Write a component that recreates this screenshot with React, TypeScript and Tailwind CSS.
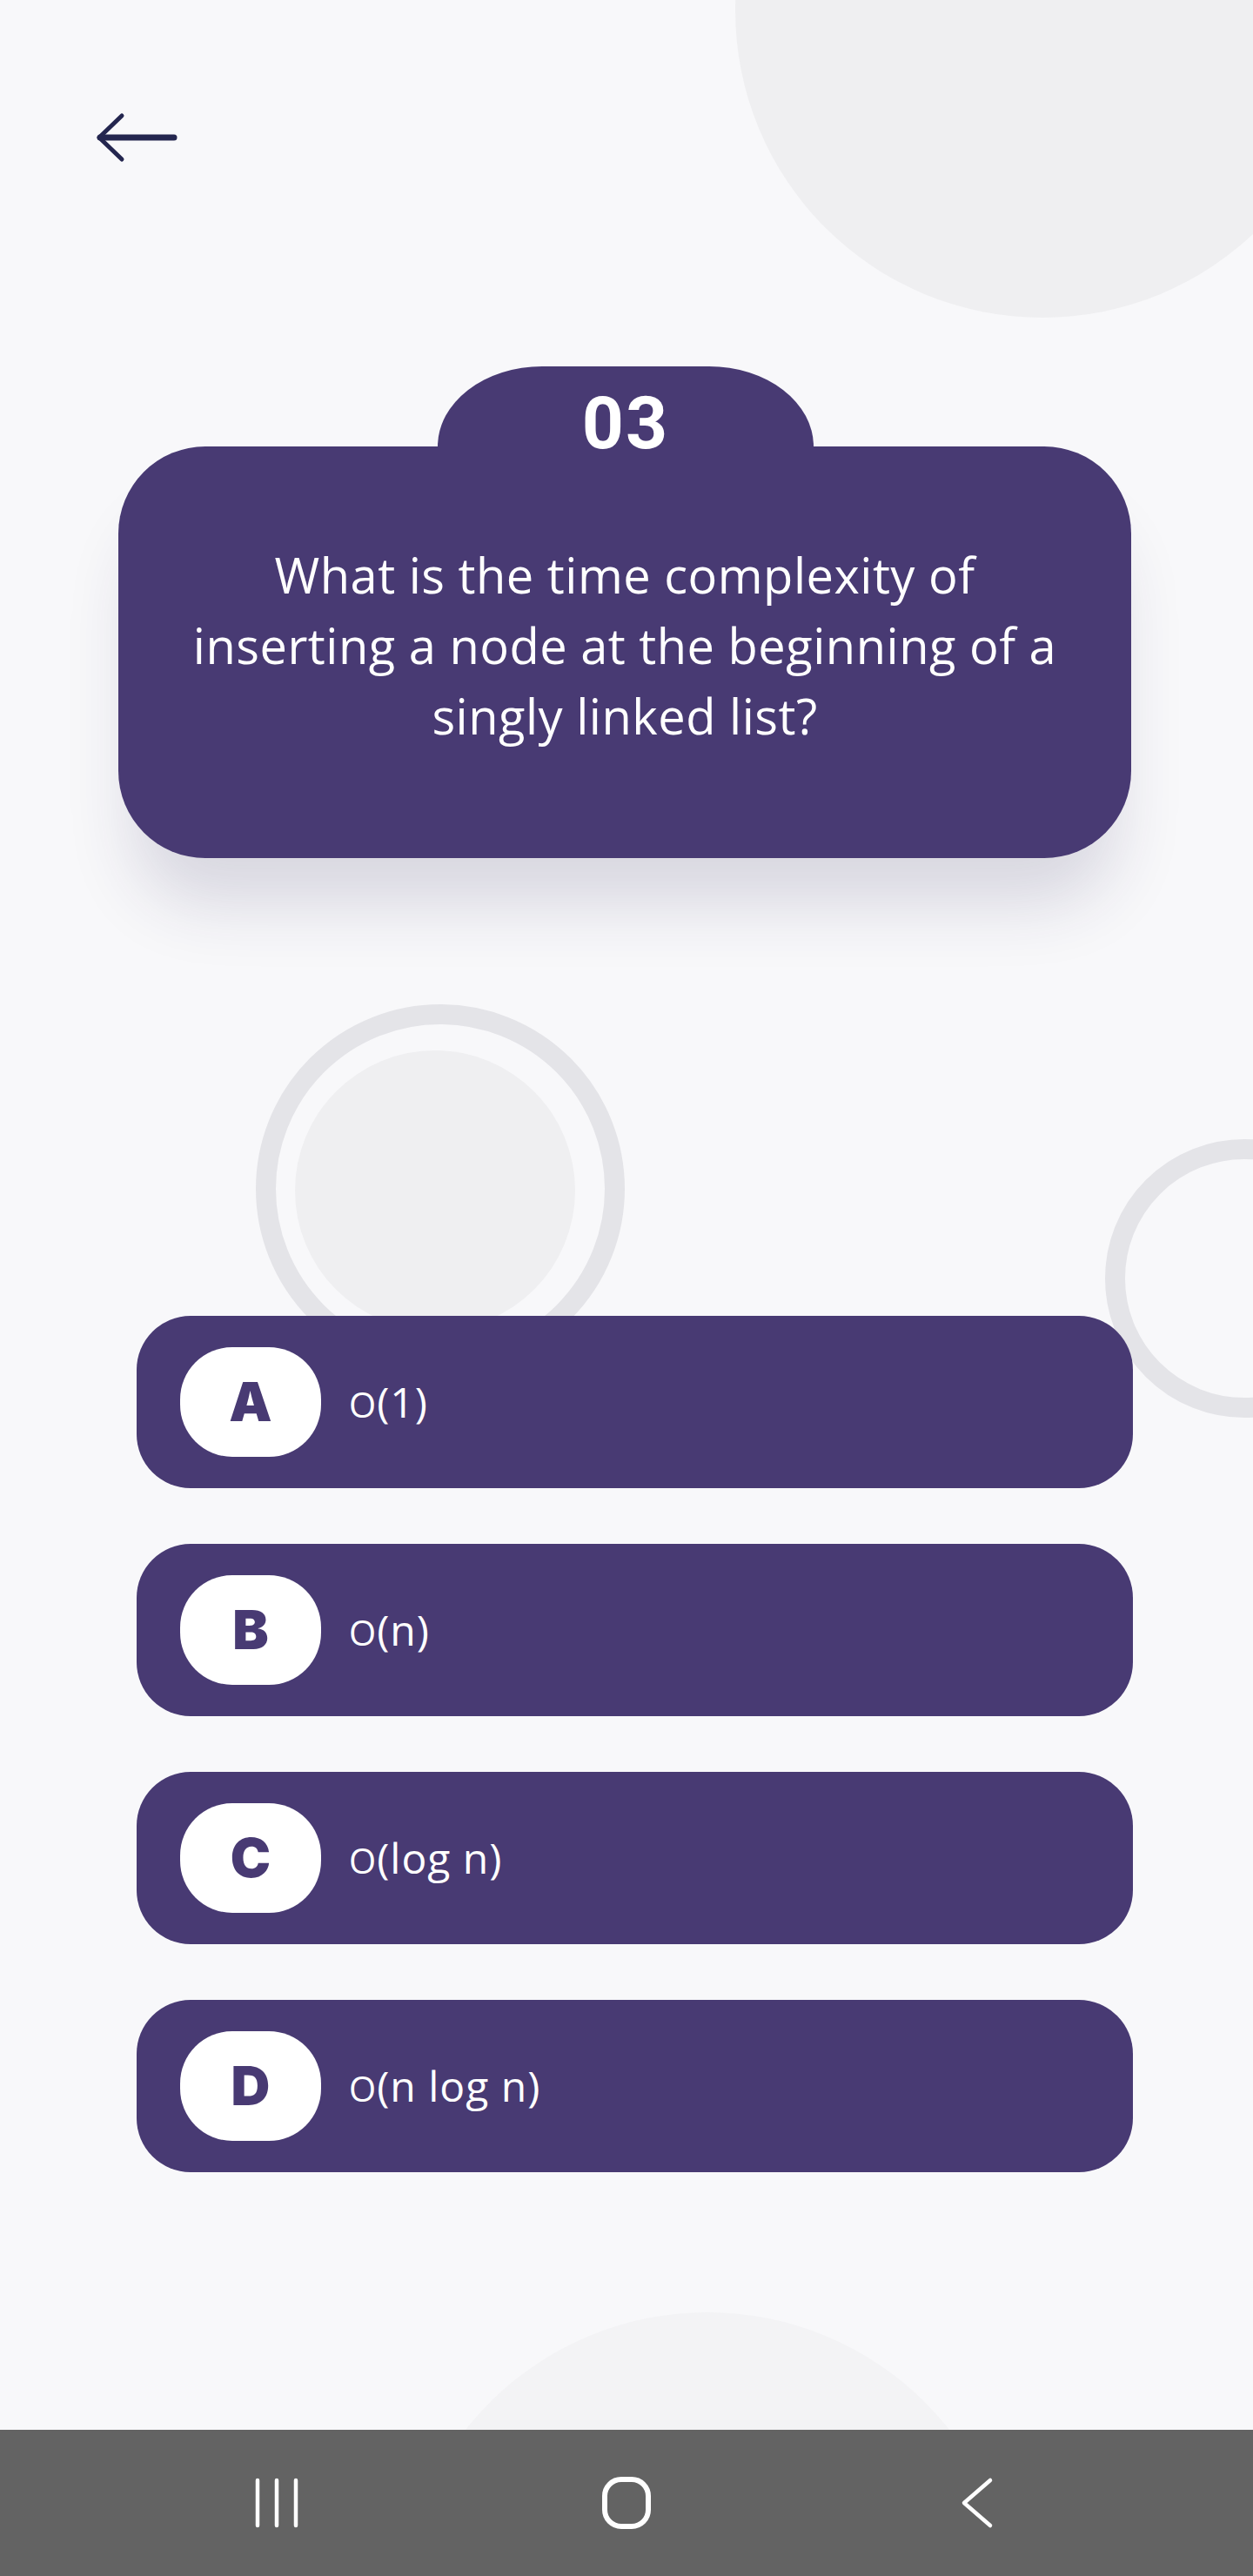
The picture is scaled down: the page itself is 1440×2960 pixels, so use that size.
import React from 'react';

const PURPLE = 'bg-[#483a73]';

interface OptionProps {
  letter: string;
  rest: string;
}

// first "O" of each answer is drawn a touch smaller than the rest, like the source font
const Option: React.FC<OptionProps> = ({ letter, rest }) => (
  <div className={`h-[198px] rounded-[62px] ${PURPLE} flex items-center pl-[50px]`}>
    <div className="w-[162px] h-[126px] rounded-[60px] bg-white flex items-center justify-center">
      <span className="text-[62px] leading-none font-black text-[#483a73] font-['Inter',sans-serif]">{letter}</span>
    </div>
    <p className="ml-[32px] text-[48px] leading-none text-white font-['Open_Sans',sans-serif] tracking-[1px]">
      <span className="text-[40px]">O</span>
      {rest}
    </p>
  </div>
);

const BackArrow = () => (
  <svg width="100" height="64" viewBox="0 0 100 64" fill="none">
    <path d="M32 6 L6 31 L32 56" stroke="#24264f" strokeWidth="5" strokeLinecap="round" strokeLinejoin="round" />
    <path d="M7 31 H92" stroke="#24264f" strokeWidth="7" strokeLinecap="round" />
  </svg>
);

const NavBar = () => (
  <div className="mt-auto h-[168px] bg-[#636363] flex items-center justify-center gap-[346px]">
    <svg width="56" height="60" viewBox="0 0 56 60" fill="none">
      <path d="M6 4 V56 M28 4 V56 M50 4 V56" stroke="white" strokeWidth="4.5" strokeLinecap="round" />
    </svg>
    <svg width="56" height="60" viewBox="0 0 56 60" fill="none">
      <rect x="3" y="3" width="50" height="54" rx="19" stroke="white" strokeWidth="6" />
    </svg>
    <svg width="56" height="60" viewBox="0 0 56 60" fill="none">
      <path d="M44 4 L14 30 L44 56" stroke="white" strokeWidth="4.5" strokeLinecap="round" strokeLinejoin="round" />
    </svg>
  </div>
);

export default function App() {
  const options = [
    { letter: 'A', rest: '(1)' },
    { letter: 'B', rest: '(n)' },
    { letter: 'C', rest: '(log n)' },
    { letter: 'D', rest: '(n log n)' },
  ];

  return (
    <div className="relative w-[1440px] h-[2960px] overflow-hidden bg-[#f8f8fa]">
      {/* background decoration */}
      <div className="absolute left-[845px] top-[-341px] w-[706px] h-[706px] rounded-full bg-[#efeff1]" />
      <div className="absolute left-[294px] top-[1154px] w-[424px] h-[424px] rounded-full border-[23px] border-[#e4e4e8]" />
      <div className="absolute left-[339px] top-[1207px] w-[322px] h-[322px] rounded-full bg-[#efeff1]" />
      <div className="absolute left-[1270px] top-[1309px] w-[320px] h-[320px] rounded-full border-[23px] border-[#e4e4e8]" />
      <div className="absolute left-[459px] top-[2657px] w-[708px] h-[708px] rounded-full bg-[#f3f3f5]" />

      <div className="relative z-10 flex flex-col h-full">
        <div className="pt-[127px] pl-[108px]">
          <BackArrow />
        </div>

        {/* question card */}
        <div className="mt-[230px]">
          <div className={`ml-[503px] w-[432px] h-[92px] rounded-tl-[120px_92px] rounded-tr-[120px_92px] ${PURPLE} pt-[24px] text-center`}>
            <span className="text-[84px] leading-none font-bold tracking-[2px] text-white font-['Roboto',sans-serif]">03</span>
          </div>
          <div className={`ml-[136px] w-[1164px] h-[473px] rounded-[100px] ${PURPLE} pt-[107px] shadow-[0_70px_80px_-20px_rgba(45,35,90,0.16)]`}>
            <p className="text-center text-white text-[56px] leading-[81px] tracking-[0.5px] font-['Open_Sans',sans-serif]">
              What is the time complexity of
              <br />
              inserting a node at the beginning of a
              <br />
              singly linked list?
            </p>
          </div>
        </div>

        {/* answers */}
        <div className="mt-[526px] ml-[157px] w-[1145px] flex flex-col gap-[64px]">
          {options.map((o) => (
            <Option key={o.letter} letter={o.letter} rest={o.rest} />
          ))}
        </div>

        <NavBar />
      </div>
    </div>
  );
}
